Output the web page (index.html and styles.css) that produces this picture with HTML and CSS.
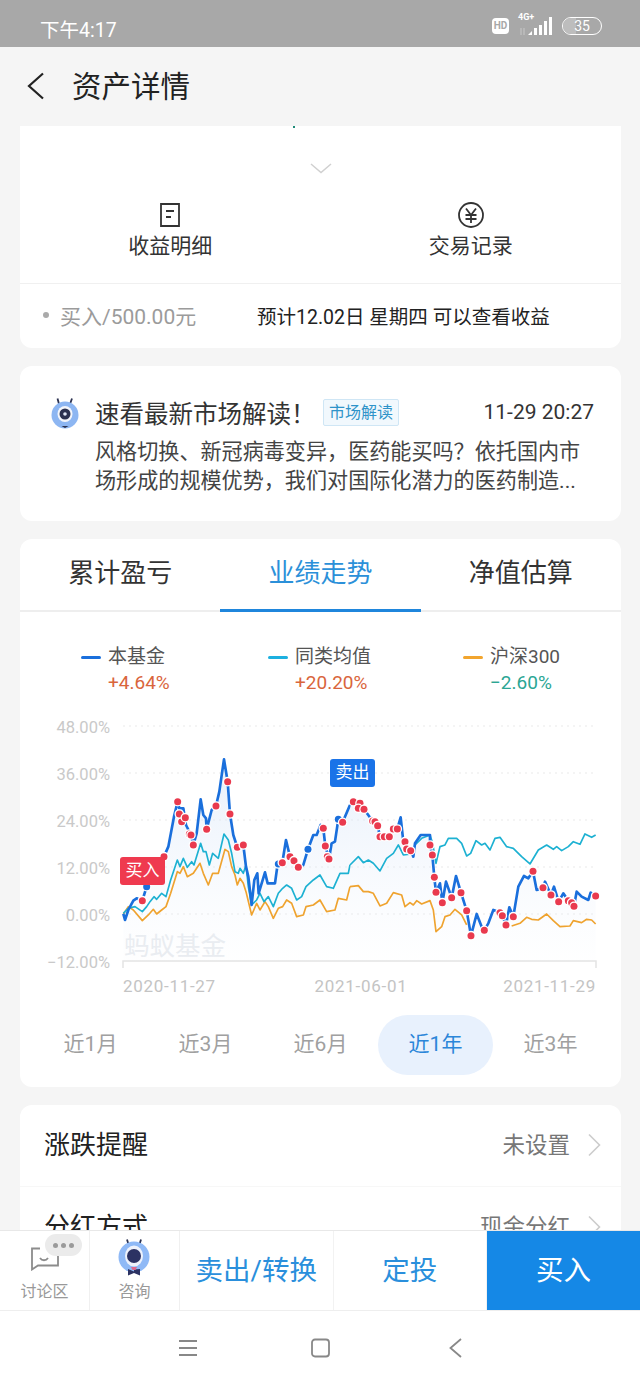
FILE: index.html
```html
<!DOCTYPE html>
<html lang="zh-CN">
<head>
    <meta charset="UTF-8">
    <meta name="viewport" content="width=device-width, initial-scale=1.0">
    <title>资产详情</title>
    <link rel="stylesheet" href="styles.css">
</head>
<body>
<div class="phone">
    <div class="statusbar">
        <span class="time">下午4:17</span>
        <div class="status-icons">
            <span class="hd">HD</span>
            <div class="signal">
                <span class="net">4G+</span>
                <svg width="35" height="20" viewBox="0 0 35 20">
                    <path class="arrows" d="M3 12v7M6 12v7"/>
                    <path class="bars" d="M10 19l4-4v4zM16 19v-7h3v7zM21 19v-10h3v10zM26 19v-14h3v14zM31 19v-18h3v18z"/>
                </svg>
            </div>
            <span class="battery"><span class="battery-level"></span><span class="battery-num">35</span></span>
        </div>
    </div>

    <div class="header">
        <svg class="back" width="18" height="28" viewBox="0 0 18 28"><path d="M16 1.500L2 14l14 12.500"/></svg>
        <h1>资产详情</h1>
    </div>

    <div class="scroll">
        <div class="card summary">
            <span class="clip-mark"></span>
            <svg class="fold" width="22" height="11" viewBox="0 0 22 11"><path d="M1 1l10 8.500L21 1"/></svg>
            <div class="actions">
                <div class="action">
                    <svg width="22" height="24" viewBox="0 0 22 24"><path d="M2 1h18v22H2zM7 8h8M7 14h5"/></svg>
                    <span>收益明细</span>
                </div>
                <div class="action">
                    <svg width="28" height="26" viewBox="0 0 28 26"><circle cx="14" cy="13" r="12"/><path d="M9 6.500l5 6.500 5-6.500M8.500 13h11M8.500 17h11M14 13v8"/></svg>
                    <span>交易记录</span>
                </div>
            </div>
            <div class="trade-row">
                <span class="bullet"></span>
                <span class="trade-name">买入/500.00元</span>
                <span class="trade-note">预计12.02日 星期四 可以查看收益</span>
            </div>
        </div>

        <div class="card news">
            <svg class="news-logo" width="30" height="32" viewBox="0 0 30 32">
                <path class="antenna" d="M9 7L7.500 1.500M20 7l2-5.500"/>
                <circle cx="15" cy="18" r="13.500" fill="#8db6f2"/>
                <ellipse cx="15" cy="17" rx="7.500" ry="8" fill="#f4f6fb"/>
                <circle cx="15" cy="17" r="5.500" fill="#2b3150"/>
                <circle cx="15" cy="17" r="1.800" fill="#dfe6f5"/>
                <path d="M11.500 29l3.500 2 3.500-2z" fill="#2b3150"/>
            </svg>
            <div class="news-main">
                <div class="news-head">
                    <span class="news-title">速看最新市场解读！</span>
                    <span class="tag">市场解读</span>
                    <span class="news-date">11-29 20:27</span>
                </div>
                <p>风格切换、新冠病毒变异，医药能买吗？依托国内市场形成的规模优势，我们对国际化潜力的医药制造...</p>
            </div>
        </div>

        <div class="card trend">
            <div class="tabs">
                <span class="tab">累计盈亏</span>
                <span class="tab active">业绩走势</span>
                <span class="tab">净值估算</span>
            </div>
            <div class="legend">
                <div class="legend-item">
                    <span class="legend-name"><i class="mark mark-blue"></i>本基金</span>
                    <span class="legend-val up">+4.64%</span>
                </div>
                <div class="legend-item">
                    <span class="legend-name"><i class="mark mark-cyan"></i>同类均值</span>
                    <span class="legend-val up">+20.20%</span>
                </div>
                <div class="legend-item">
                    <span class="legend-name"><i class="mark mark-orange"></i>沪深300</span>
                    <span class="legend-val down">−2.60%</span>
                </div>
            </div>
            <div class="chart">
                <span class="badge badge-buy">买入</span>
                <span class="badge badge-sell">卖出</span>
                <svg width="601" height="290" viewBox="0 0 601 290">
                    <defs>
                        <linearGradient id="areaFill" gradientUnits="userSpaceOnUse" x1="0" y1="150" x2="0" y2="752">
                            <stop offset="0" stop-color="#d8e6f9" stop-opacity=".6"/>
                            <stop offset="1" stop-color="#eef3fb" stop-opacity=".05"/>
                        </linearGradient>
                    </defs>
                    <g class="grid">
                        <path d="M103 16H576M103 63H576M103 110H576M103 157H576M103 204H576"/>
                    </g>
                    <path class="axis" d="M103 258V251H576V258"/>
                    <g class="y-labels">
                        <text x="90" y="23">48.00%</text>
                        <text x="90" y="70">36.00%</text>
                        <text x="90" y="117">24.00%</text>
                        <text x="90" y="164">12.00%</text>
                        <text x="90" y="211">0.00%</text>
                        <text x="90" y="258">−12.00%</text>
                    </g>
                    <text class="watermark" x="104" y="245">蚂蚁基金</text>
                    <g class="x-labels">
                        <text x="103" y="282">2020-11-27</text>
                        <text x="341" y="282" text-anchor="middle">2021-06-01</text>
                        <text x="576" y="282" text-anchor="end">2021-11-29</text>
                    </g>

                    <g transform="translate(80 0) scale(.3333)">
                        <polygon fill="url(#areaFill)" points="70,612 75,630 85,600 100,572 110,565 127,572 140,530 165,470 192,440 205,410 222,320 233,275 238,295 250,295 258,345 273,375 280,405 290,370 302,268 310,315 318,325 320,358 335,300 348,288 358,245 372,148 383,215 390,312 400,375 412,412 430,405 438,470 445,500 455,585 463,510 472,490 476,550 495,487 503,520 525,520 533,462 547,458 558,390 570,440 582,452 595,472 610,465 624,418 640,375 650,375 662,345 670,355 676,408 687,447 695,400 705,395 715,328 728,337 750,285 750,752 70,752"/>
                        <polyline class="line-orange" points="70,612 85,590 100,600 127,632 145,615 160,598 170,612 185,600 198,590 212,550 232,485 240,490 250,470 262,500 280,490 300,460 310,490 325,525 338,490 355,490 375,418 385,425 395,470 405,495 412,525 420,505 430,520 438,545 455,615 470,580 480,600 495,575 505,590 520,625 535,595 548,590 560,570 575,580 590,620 610,615 618,590 640,585 660,570 680,605 705,600 715,565 740,570 750,530"/>
                        <polyline class="line-cyan" points="70,610 85,595 105,590 127,605 140,590 150,575 162,560 170,568 185,550 198,560 212,510 232,450 240,470 250,445 262,472 275,455 282,465 302,400 310,425 318,425 328,465 338,430 355,445 372,372 385,390 395,430 405,485 415,490 420,475 430,490 438,465 445,530 455,585 470,570 480,550 492,575 505,560 520,590 535,550 548,535 560,525 575,535 590,570 605,560 618,530 640,510 660,495 680,530 700,535 720,490 745,490 750,465"/>
                        <polyline class="line-blue" points="70,612 75,630 85,600 100,572 110,565 127,572 140,530 165,470 192,440 205,410 222,320 233,275 238,295 250,295 258,345 273,375 280,405 290,370 302,268 310,315 318,325 320,358 335,300 348,288 358,245 372,148 383,215 390,312 400,375 412,412 430,405 438,470 445,500 455,585 463,510 472,490 476,550 495,487 503,520 525,520 533,462 547,458 558,390 570,440 582,452 595,472 610,465 624,418 640,375 650,375 662,345 670,355 676,408 687,447 695,400 705,395 715,328 728,337 750,285"/>
                    </g>
                    <g transform="translate(330 0) scale(.3333)">
                        <polygon fill="url(#areaFill)" points="0,285 10,275 30,280 42,298 68,333 83,347 90,380 118,380 130,357 142,357 152,322 160,395 165,397 170,417 182,422 190,440 195,400 212,375 240,375 240,405 247,435 253,502 258,547 270,520 277,578 288,515 305,563 318,498 333,548 350,602 363,677 380,612 395,650 403,661 415,640 430,600 445,605 457,617 468,645 478,592 490,620 505,530 522,498 535,505 549,484 560,540 579,533 585,515 603,555 612,530 626,575 640,550 655,572 672,589 680,545 695,560 715,570 722,548 737,558 737,752 0,752"/>
                        <polyline class="line-orange" points="0,530 25,527 40,545 55,545 70,550 90,588 110,580 130,548 155,555 165,590 180,578 190,585 200,572 215,582 240,572 250,600 258,665 275,650 285,620 300,615 315,598 335,615 350,645"/>
                        <polyline class="line-orange" points="485,648 510,640 530,622 545,628 565,630 590,612 610,632 630,650 660,648 670,632 695,638 710,628 725,630 737,642"/>
                        <polyline class="line-cyan" points="0,465 25,440 40,458 55,450 70,460 90,483 110,445 130,430 145,405 160,435 185,432 195,405 215,385 240,375 248,400 258,460 270,410 285,405 295,385 320,385 335,400 350,438 362,430 378,392 395,405 405,400 420,420 435,385 450,382 470,410 490,415 515,440 540,462 565,420 590,405 610,418 620,410 635,422 655,410 670,395 690,403 705,372 725,382 737,375"/>
                        <polyline class="line-blue" points="0,285 10,275 30,280 42,298 68,333 83,347 90,380 118,380 130,357 142,357 152,322 160,395 165,397 170,417 182,422 190,440 195,400 212,375 240,375 240,405 247,435 253,502 258,547 270,520 277,578 288,515 305,563 318,498 333,548 350,602 363,677 380,612 395,650 403,661 415,640 430,600 445,605 457,617 468,645 478,592 490,620 505,530 522,498 535,505 549,484 560,540 579,533 585,515 603,555 612,530 626,575 640,550 655,572 672,589 680,545 695,560 715,570 722,548 737,558"/>
                    </g>

                    <g transform="translate(80 0) scale(.3333)">
                        <g class="dots-blue">
                            <circle cx="140" cy="530"/><circle cx="535" cy="462"/><circle cx="624" cy="418"/><circle cx="715" cy="328"/>
                        </g>
                        <g class="dots-red">
                            <circle cx="127" cy="572"/><circle cx="192" cy="440"/><circle cx="245" cy="335"/><circle cx="238" cy="312"/><circle cx="233" cy="275"/><circle cx="256" cy="323"/><circle cx="268" cy="372"/><circle cx="273" cy="375"/><circle cx="280" cy="405"/><circle cx="320" cy="358"/><circle cx="348" cy="288"/><circle cx="383" cy="215"/><circle cx="390" cy="312"/><circle cx="412" cy="412"/><circle cx="430" cy="405"/><circle cx="547" cy="458"/><circle cx="570" cy="440"/><circle cx="582" cy="452"/><circle cx="595" cy="472"/><circle cx="670" cy="355"/><circle cx="676" cy="408"/><circle cx="682" cy="440"/><circle cx="687" cy="447"/><circle cx="728" cy="337"/>
                        </g>
                    </g>
                    <g transform="translate(330 0) scale(.3333)">
                        <g class="dots-red">
                            <circle cx="10" cy="275"/><circle cx="30" cy="280"/><circle cx="25" cy="295"/><circle cx="42" cy="298"/><circle cx="68" cy="333"/><circle cx="75" cy="335"/><circle cx="83" cy="347"/><circle cx="90" cy="380"/><circle cx="103" cy="380"/><circle cx="118" cy="380"/><circle cx="130" cy="357"/><circle cx="142" cy="357"/><circle cx="165" cy="395"/><circle cx="170" cy="417"/><circle cx="182" cy="422"/><circle cx="240" cy="405"/><circle cx="247" cy="435"/><circle cx="253" cy="502"/><circle cx="258" cy="547"/><circle cx="277" cy="578"/><circle cx="305" cy="563"/><circle cx="333" cy="548"/><circle cx="350" cy="602"/><circle cx="363" cy="677"/><circle cx="403" cy="661"/><circle cx="450" cy="608"/><circle cx="457" cy="617"/><circle cx="468" cy="645"/><circle cx="490" cy="620"/><circle cx="549" cy="484"/><circle cx="579" cy="533"/><circle cx="603" cy="555"/><circle cx="626" cy="575"/><circle cx="655" cy="572"/><circle cx="665" cy="578"/><circle cx="672" cy="589"/><circle cx="737" cy="558"/>
                        </g>
                    </g>
                </svg>
            </div>
            <div class="ranges">
                <span class="range">近1月</span>
                <span class="range">近3月</span>
                <span class="range">近6月</span>
                <span class="range active">近1年</span>
                <span class="range">近3年</span>
            </div>
        </div>

        <div class="card settings">
            <div class="setting">
                <span class="setting-name">涨跌提醒</span>
                <span class="setting-val">未设置</span>
                <svg width="14" height="24" viewBox="0 0 14 24"><path d="M2 1.500L12.500 12 2 22.500"/></svg>
            </div>
            <div class="setting">
                <span class="setting-name">分红方式</span>
                <span class="setting-val">现金分红</span>
                <svg width="14" height="24" viewBox="0 0 14 24"><path d="M2 1.500L12.500 12 2 22.500"/></svg>
            </div>
        </div>
    </div>

    <div class="bottombar">
        <div class="side-btn">
            <svg class="bubble" width="30" height="24" viewBox="0 0 30 24"><path d="M10 1.500H2v21l6-4h20V8M10 11c2 3 6 3 8 0"/></svg>
            <span class="more"><i></i><i></i><i></i></span>
            <span>讨论区</span>
        </div>
        <div class="side-btn">
            <svg class="robot" width="32" height="38" viewBox="0 0 32 38">
                <path class="antenna" d="M11 8L9 1.500M21 8l2-6.500"/>
                <circle cx="16" cy="19" r="15.500" fill="#8fb9f6"/>
                <ellipse cx="16" cy="18" rx="9" ry="10.500" fill="#eef2fb"/>
                <circle cx="16" cy="18" r="7" fill="#2c3263"/>
                <path d="M10 31l6 2.500v-2l6-.500v6.500l-6-2.500-6 2.500z" fill="#2c3263"/>
                <path d="M13 29h6l-1.500 3h-3z" fill="#e0688c"/>
            </svg>
            <span>咨询</span>
        </div>
        <div class="main-btn">卖出/转换</div>
        <div class="main-btn">定投</div>
        <div class="main-btn buy">买入</div>
    </div>

    <div class="navbar">
        <svg class="nav-menu" width="18" height="18" viewBox="0 0 18 18"><path d="M0 2h18M0 9h18M0 16h18"/></svg>
        <svg class="nav-home" width="19" height="20" viewBox="0 0 19 20"><rect x="1" y="1.500" width="17" height="17" rx="3"/></svg>
        <svg class="nav-back" width="13" height="20" viewBox="0 0 13 20"><path d="M12 1L1.500 10 12 19"/></svg>
    </div>
</div>
</body>
</html>
```

FILE: styles.css
```css
* {
    margin: 0;
    padding: 0;
    box-sizing: border-box;
}
body {
    background-color: #f5f5f5;
    font-family: Roboto, "Noto Sans CJK SC", sans-serif;
    color: #222;
}
.phone {
    width: 640px;
    height: 1387px;
    display: flex;
    flex-direction: column;
    overflow: hidden;
}
svg {
    display: block;
    fill: none;
}

/* status bar */
.statusbar {
    height: 47px;
    flex: none;
    background-color: #a8a8a8;
    display: flex;
    align-items: center;
    justify-content: space-between;
    padding: 9px 38px 0 40px;
    color: #fff;
}
.time {
    font-size: 19.500px;
}
.status-icons {
    display: flex;
    align-items: center;
    margin-top: -5px;
}
.hd {
    width: 17px;
    height: 16px;
    background-color: #fff;
    color: #a8a8a8;
    border-radius: 4px;
    font-size: 10px;
    font-weight: 700;
    line-height: 16px;
    text-align: center;
}
.signal {
    position: relative;
    width: 35px;
    height: 20px;
    margin-left: 9px;
}
.net {
    position: absolute;
    left: 0;
    top: -4px;
    font-size: 9px;
    font-weight: 700;
}
.signal svg {
    position: absolute;
    left: 0;
    top: 0;
}
.bars {
    fill: #fff;
}
.arrows {
    stroke: #c8c8c8;
    stroke-width: 1;
}
.battery {
    position: relative;
    width: 40px;
    height: 18px;
    margin-left: 9px;
    border: 1.500px solid #fff;
    border-radius: 9px;
    overflow: hidden;
    display: flex;
    align-items: center;
    justify-content: center;
}
.battery-level {
    position: absolute;
    left: 0;
    top: 0;
    bottom: 0;
    width: 35%;
    background-color: #bdbdbd;
}
.battery-num {
    position: relative;
    font-size: 14px;
    line-height: 1;
}

/* header */
.header {
    height: 79px;
    flex: none;
    display: flex;
    align-items: center;
    padding: 0 0 2px 27px;
}
.back path {
    stroke: #222;
    stroke-width: 2.200;
}
.header h1 {
    font-size: 29.500px;
    font-weight: 400;
    margin: -4px 0 0 27px;
}

/* cards */
.scroll {
    height: 1104px;
    flex: none;
    overflow: hidden;
    padding: 0 19px 0 20px;
}
.card {
    background-color: #fff;
    border-radius: 12px;
    margin-bottom: 18px;
}
.summary {
    position: relative;
    height: 222px;
    border-radius: 0 0 12px 12px;
    padding-top: 37px;
    display: flex;
    flex-direction: column;
}
.clip-mark {
    position: absolute;
    left: 273px;
    top: 0;
    width: 2px;
    height: 2px;
    background-color: #1e8a78;
}
.fold {
    margin: 0 auto;
    flex: none;
}
.fold path {
    stroke: #d0d0d0;
    stroke-width: 1.500;
}
.actions {
    display: flex;
    height: 110px;
    padding-top: 28px;
    border-bottom: 1px solid #f0f0f0;
}
.action {
    flex: 1;
    display: flex;
    flex-direction: column;
    align-items: center;
    justify-content: flex-start;
    font-size: 21px;
    color: #333;
}
.action svg {
    height: 26px;
    margin-bottom: 1px;
}
.action svg path,
.action svg circle {
    stroke: #333;
    stroke-width: 1.800;
}
.trade-row {
    flex: 1;
    display: flex;
    align-items: center;
    padding: 0 0 2px 23px;
    font-size: 21px;
}
.bullet {
    width: 6px;
    height: 6px;
    background-color: #aaa;
    border-radius: 50%;
    margin-right: 11px;
}
.trade-name {
    color: #9b9b9b;
    width: 197px;
}
.trade-note {
    font-size: 19.500px;
    color: #222;
}

/* news */
.news {
    height: 155px;
    display: flex;
    padding: 31px 27px 0 30px;
}
.news-logo {
    flex: none;
    margin-right: 15px;
}
.antenna {
    stroke: #2b3150;
    stroke-width: 1.800;
}
.news-main {
    flex: 1;
    min-width: 0;
}
.news-head {
    display: flex;
    align-items: center;
    height: 30px;
}
.news-title {
    font-size: 24.500px;
    color: #333;
    width: 228px;
}
.tag {
    height: 27px;
    width: 76px;
    border: 1px solid #cfe6f5;
    background-color: #f1f8fd;
    color: #2e93c9;
    font-size: 16px;
    line-height: 25px;
    text-align: center;
    border-radius: 2px;
}
.news-date {
    margin-left: auto;
    font-size: 21px;
    color: #333;
}
.news p {
    font-size: 21.100px;
    line-height: 28.500px;
    color: #444;
    margin-top: 11px;
}

/* trend */
.trend {
    height: 548px;
}
.tabs {
    height: 73px;
    display: flex;
    border-bottom: 2px solid #eee;
}
.tab {
    flex: 1;
    font-size: 26px;
    line-height: 68px;
    text-align: center;
    color: #333;
    height: 73px;
}
.tab.active {
    color: #2b90d9;
    border-bottom: 3px solid #1f86dc;
}
.legend {
    display: grid;
    grid-template-columns: 187px 195px 1fr;
    padding: 32px 0 14px 61px;
}
.legend-item {
    display: flex;
    flex-direction: column;
}
.legend-name {
    display: flex;
    align-items: center;
    font-size: 19px;
    line-height: 26px;
    color: #555;
}
.mark {
    width: 20px;
    height: 3px;
    border-radius: 2px;
    margin-right: 7px;
}
.mark-blue {
    background-color: #1a6fdc;
}
.mark-cyan {
    background-color: #1cb0e0;
}
.mark-orange {
    background-color: #f2a52e;
}
.legend-val {
    font-size: 19px;
    line-height: 26px;
    padding-left: 27px;
}
.up {
    color: #d9653c;
}
.down {
    color: #2ba694;
}
.chart {
    position: relative;
    height: 290px;
}
.grid path {
    stroke: #e9e9e9;
    stroke-dasharray: 2 4;
}
.axis {
    stroke: #e4e4e4;
    stroke-width: 1.500;
}
.y-labels text {
    fill: #c9c9c9;
    font-size: 16.500px;
    text-anchor: end;
}
.x-labels text {
    fill: #c4c4c4;
    font-size: 17px;
    letter-spacing: .7px;
}
.watermark {
    fill: #e9ecf0;
    font-size: 25.500px;
}
.line-blue {
    stroke: #1a6fdc;
    stroke-width: 8;
    stroke-linejoin: round;
}
.line-cyan {
    stroke: #1db1d2;
    stroke-width: 5;
    stroke-linejoin: round;
}
.line-orange {
    stroke: #efa32f;
    stroke-width: 5;
    stroke-linejoin: round;
}
.dots-red circle,
.dots-blue circle {
    r: 10.500px;
    stroke: #fff;
    stroke-width: 8;
    paint-order: stroke;
}
.dots-red {
    fill: #e93a4e;
}
.dots-blue {
    fill: #1a6fdc;
}
.badge {
    position: absolute;
    width: 45px;
    height: 28px;
    border-radius: 3px;
    color: #fff;
    font-size: 17px;
    line-height: 27px;
    text-align: center;
}
.badge-buy {
    left: 100px;
    top: 147px;
    background-color: #ef3a4f;
}
.badge-sell {
    left: 310px;
    top: 49px;
    background-color: #1a73e8;
}
.ranges {
    display: flex;
    margin-top: 15px;
    padding: 0 13px;
}
.range {
    width: 115px;
    height: 60px;
    border-radius: 30px;
    font-size: 21px;
    line-height: 58px;
    text-align: center;
    color: #a0a0a0;
}
.range.active {
    background-color: #e8f1fd;
    color: #2b86d9;
}

/* settings */
.settings {
    margin-bottom: 0;
}
.setting {
    height: 82px;
    display: flex;
    align-items: center;
    padding: 0 20px 0 24px;
    border-bottom: 1px solid #f7f7f7;
}
.setting-name {
    font-size: 26px;
    color: #222;
    margin-top: -6px;
}
.setting-val {
    margin-left: auto;
    margin-top: -6px;
    margin-right: 17px;
    font-size: 22.500px;
    color: #777;
}
.setting svg {
    margin-top: -2px;
}
.setting svg path {
    stroke: #ccc;
    stroke-width: 1.600;
}

/* bottom bar */
.bottombar {
    height: 81px;
    flex: none;
    display: flex;
    background-color: #fff;
    border-top: 1px solid #e8e8e8;
    border-bottom: 1px solid #eee;
}
.side-btn {
    position: relative;
    width: 90px;
    border-right: 1px solid #f0f0f0;
    display: flex;
    flex-direction: column;
    align-items: center;
    justify-content: flex-end;
    font-size: 16px;
    color: #999;
    padding-bottom: 8px;
}
.bubble {
    position: absolute;
    left: 30px;
    top: 16px;
}
.bubble path {
    stroke: #8c8c8c;
    stroke-width: 1.800;
}
.more {
    position: absolute;
    left: 45px;
    top: 3px;
    width: 37px;
    height: 22px;
    border-radius: 11px;
    background-color: #ebebeb;
    display: flex;
    align-items: center;
    justify-content: center;
    gap: 3px;
}
.more i {
    width: 5px;
    height: 5px;
    border-radius: 50%;
    background-color: #9a9a9a;
}
.robot {
    position: absolute;
    left: 28px;
    top: 7px;
}
.main-btn {
    width: 153.500px;
    font-size: 27.500px;
    line-height: 79px;
    text-align: center;
    color: #2a8fdc;
    border-right: 1px solid #f2f2f2;
}
.main-btn.buy {
    flex: 1;
    background-color: #1588e6;
    color: #fff;
    border-right: 0;
}

/* nav bar */
.navbar {
    height: 76px;
    flex: none;
    background-color: #fff;
    display: flex;
    align-items: center;
    padding: 0 0 2px 179px;
}
.nav-home {
    margin-left: 114px;
}
.nav-back {
    margin-left: 119px;
}
.navbar path,
.navbar rect {
    stroke: #888;
    stroke-width: 1.800;
}
```
